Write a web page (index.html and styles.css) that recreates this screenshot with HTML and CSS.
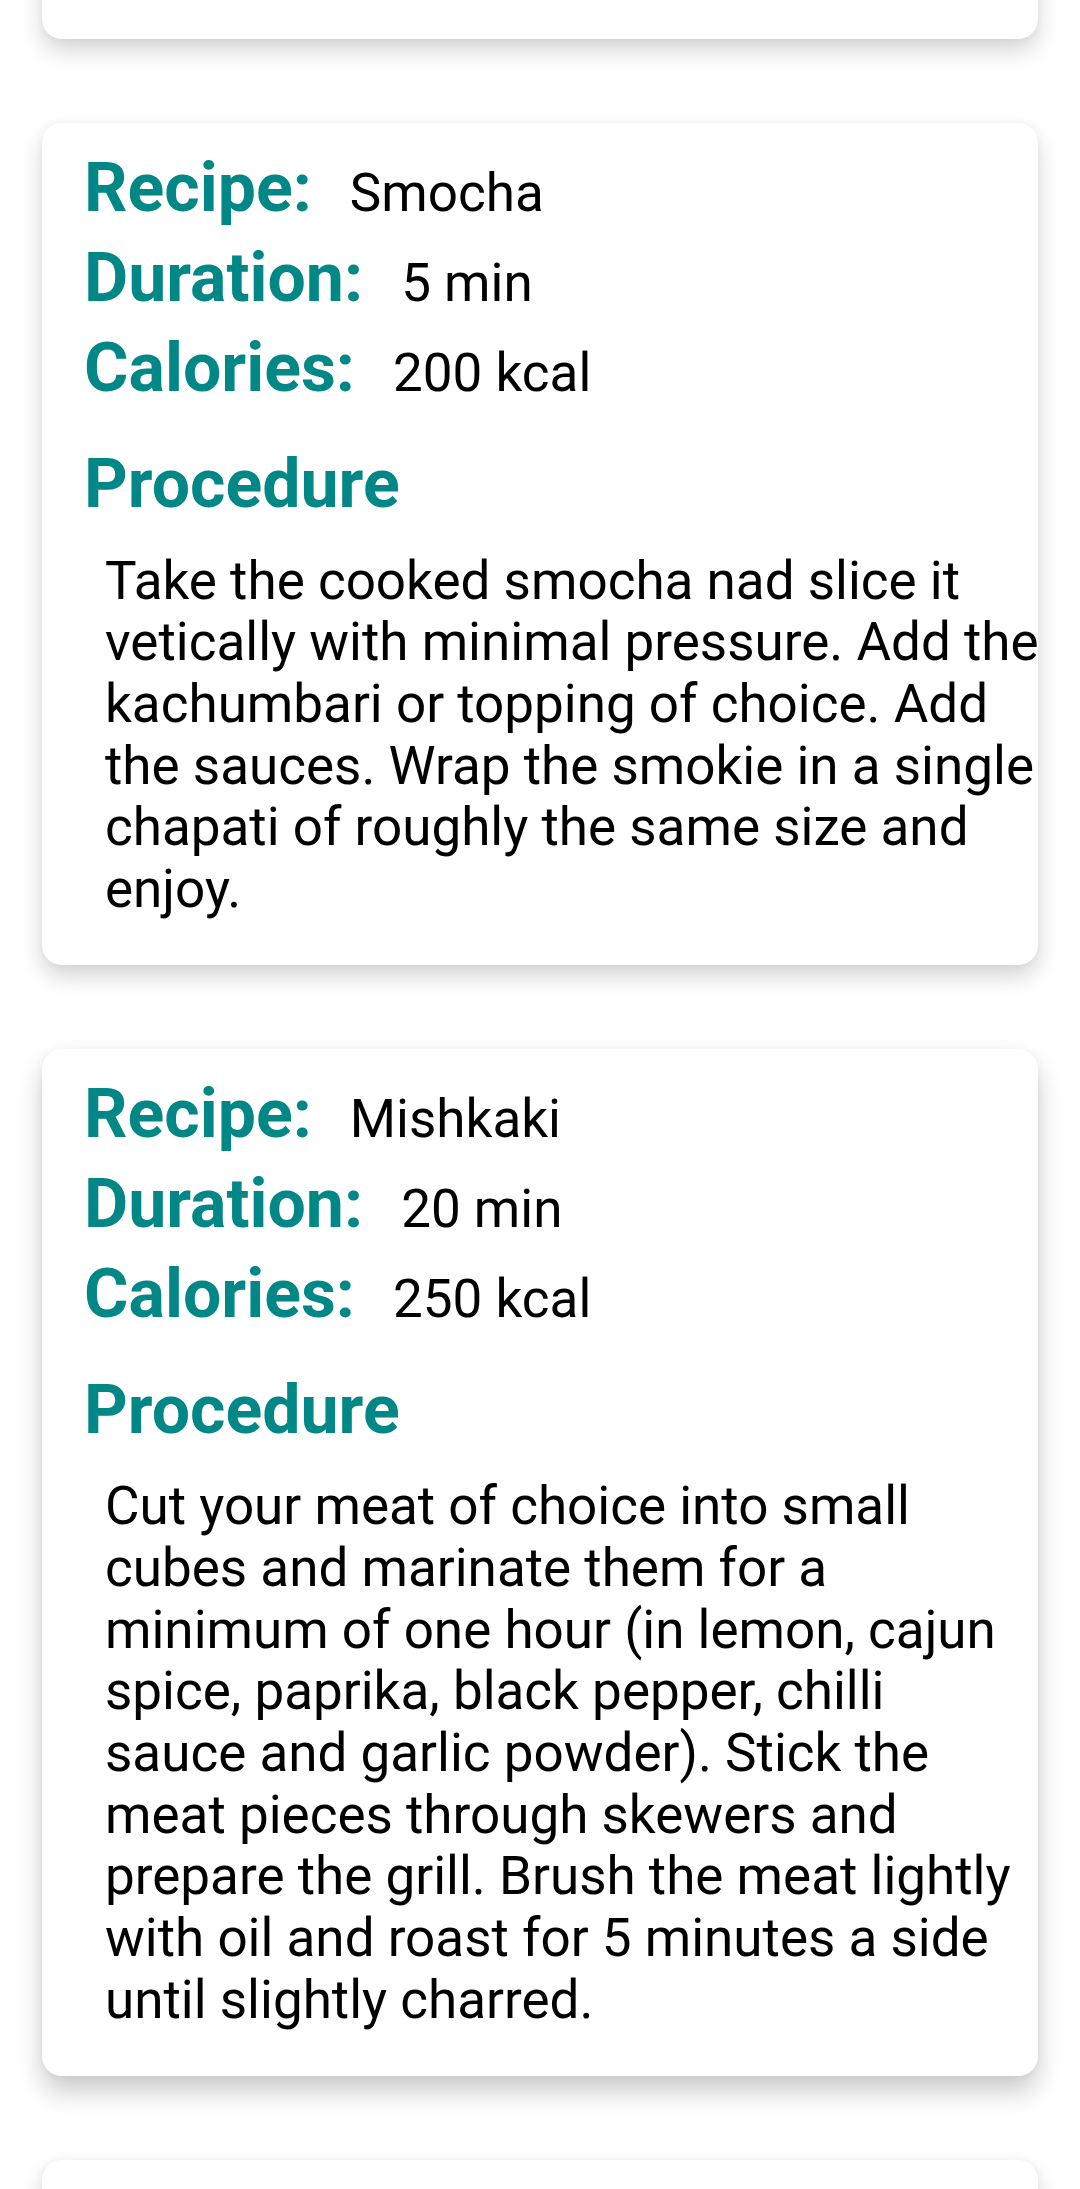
FILE: index.html
```html
<!DOCTYPE html>
<html lang="en">
<head>
<meta charset="utf-8">
<title>Recipes</title>
<link rel="stylesheet" href="styles.css">
</head>
<body>
<div class="screen">
  <div class="list">
    <div class="card card-partial"></div>

    <div class="card">
      <div class="row"><span class="label">Recipe:</span><span class="value">Smocha</span></div>
      <div class="row"><span class="label">Duration:</span><span class="value">5 min</span></div>
      <div class="row"><span class="label">Calories:</span><span class="value">200 kcal</span></div>
      <h2 class="heading">Procedure</h2>
      <p class="body">Take the cooked smocha nad slice it<br>
vetically with minimal pressure. Add the<br>
kachumbari or topping of choice. Add<br>
the sauces. Wrap the smokie in a single<br>
chapati of roughly the same size and<br>
enjoy.</p>
    </div>

    <div class="card card-low">
      <div class="row"><span class="label">Recipe:</span><span class="value">Mishkaki</span></div>
      <div class="row"><span class="label">Duration:</span><span class="value">20 min</span></div>
      <div class="row"><span class="label">Calories:</span><span class="value">250 kcal</span></div>
      <h2 class="heading">Procedure</h2>
      <p class="body">Cut your meat of choice into small<br>
cubes and marinate them for a<br>
minimum of one hour (in lemon, cajun<br>
spice, paprika, black pepper, chilli<br>
sauce and garlic powder). Stick the<br>
meat pieces through skewers and<br>
prepare the grill. Brush the meat lightly<br>
with oil and roast for 5 minutes a side<br>
until slightly charred.</p>
    </div>

    <div class="card card-partial"></div>
  </div>
</div>
</body>
</html>
```

FILE: styles.css
```css
html, body {
  margin: 0;
  padding: 0;
  background: #ffffff;
}

body {
  width: 1080px;
  height: 2189px;
  overflow: hidden;
  font-family: Roboto, "Noto Sans", "Liberation Sans", sans-serif;
}

.screen {
  width: 1080px;
  height: 2189px;
  overflow: hidden;
}

.list {
  display: flex;
  flex-direction: column;
  gap: 84px;
  padding: 0 42px;
  margin-top: -121px;
}

.card {
  background: #ffffff;
  border-radius: 20px;
  box-shadow: 0 12px 22px rgba(0, 0, 0, 0.16), 0 0 10px rgba(0, 0, 0, 0.05);
  padding: 20px 0 44px 42px;
}

.card-low {
  box-shadow: 0 16px 26px rgba(0, 0, 0, 0.2), 0 0 10px rgba(0, 0, 0, 0.05);
}

.card-partial {
  height: 160px;
  padding: 0;
  box-sizing: border-box;
}

.row {
  display: flex;
  align-items: baseline;
}

.label {
  font-weight: 700;
  font-size: 68px;
  line-height: 90px;
  color: #018786;
}

.value {
  font-weight: 400;
  font-size: 53px;
  line-height: normal;
  color: #000000;
  margin-left: 38px;
}

.heading {
  margin: 26px 0 0;
  font-weight: 700;
  font-size: 68px;
  line-height: 90px;
  color: #018786;
}

.body {
  margin: 21.5px 0 0 21px;
  font-size: 53px;
  line-height: 61.7px;
  color: #000000;
  white-space: nowrap;
}
```
